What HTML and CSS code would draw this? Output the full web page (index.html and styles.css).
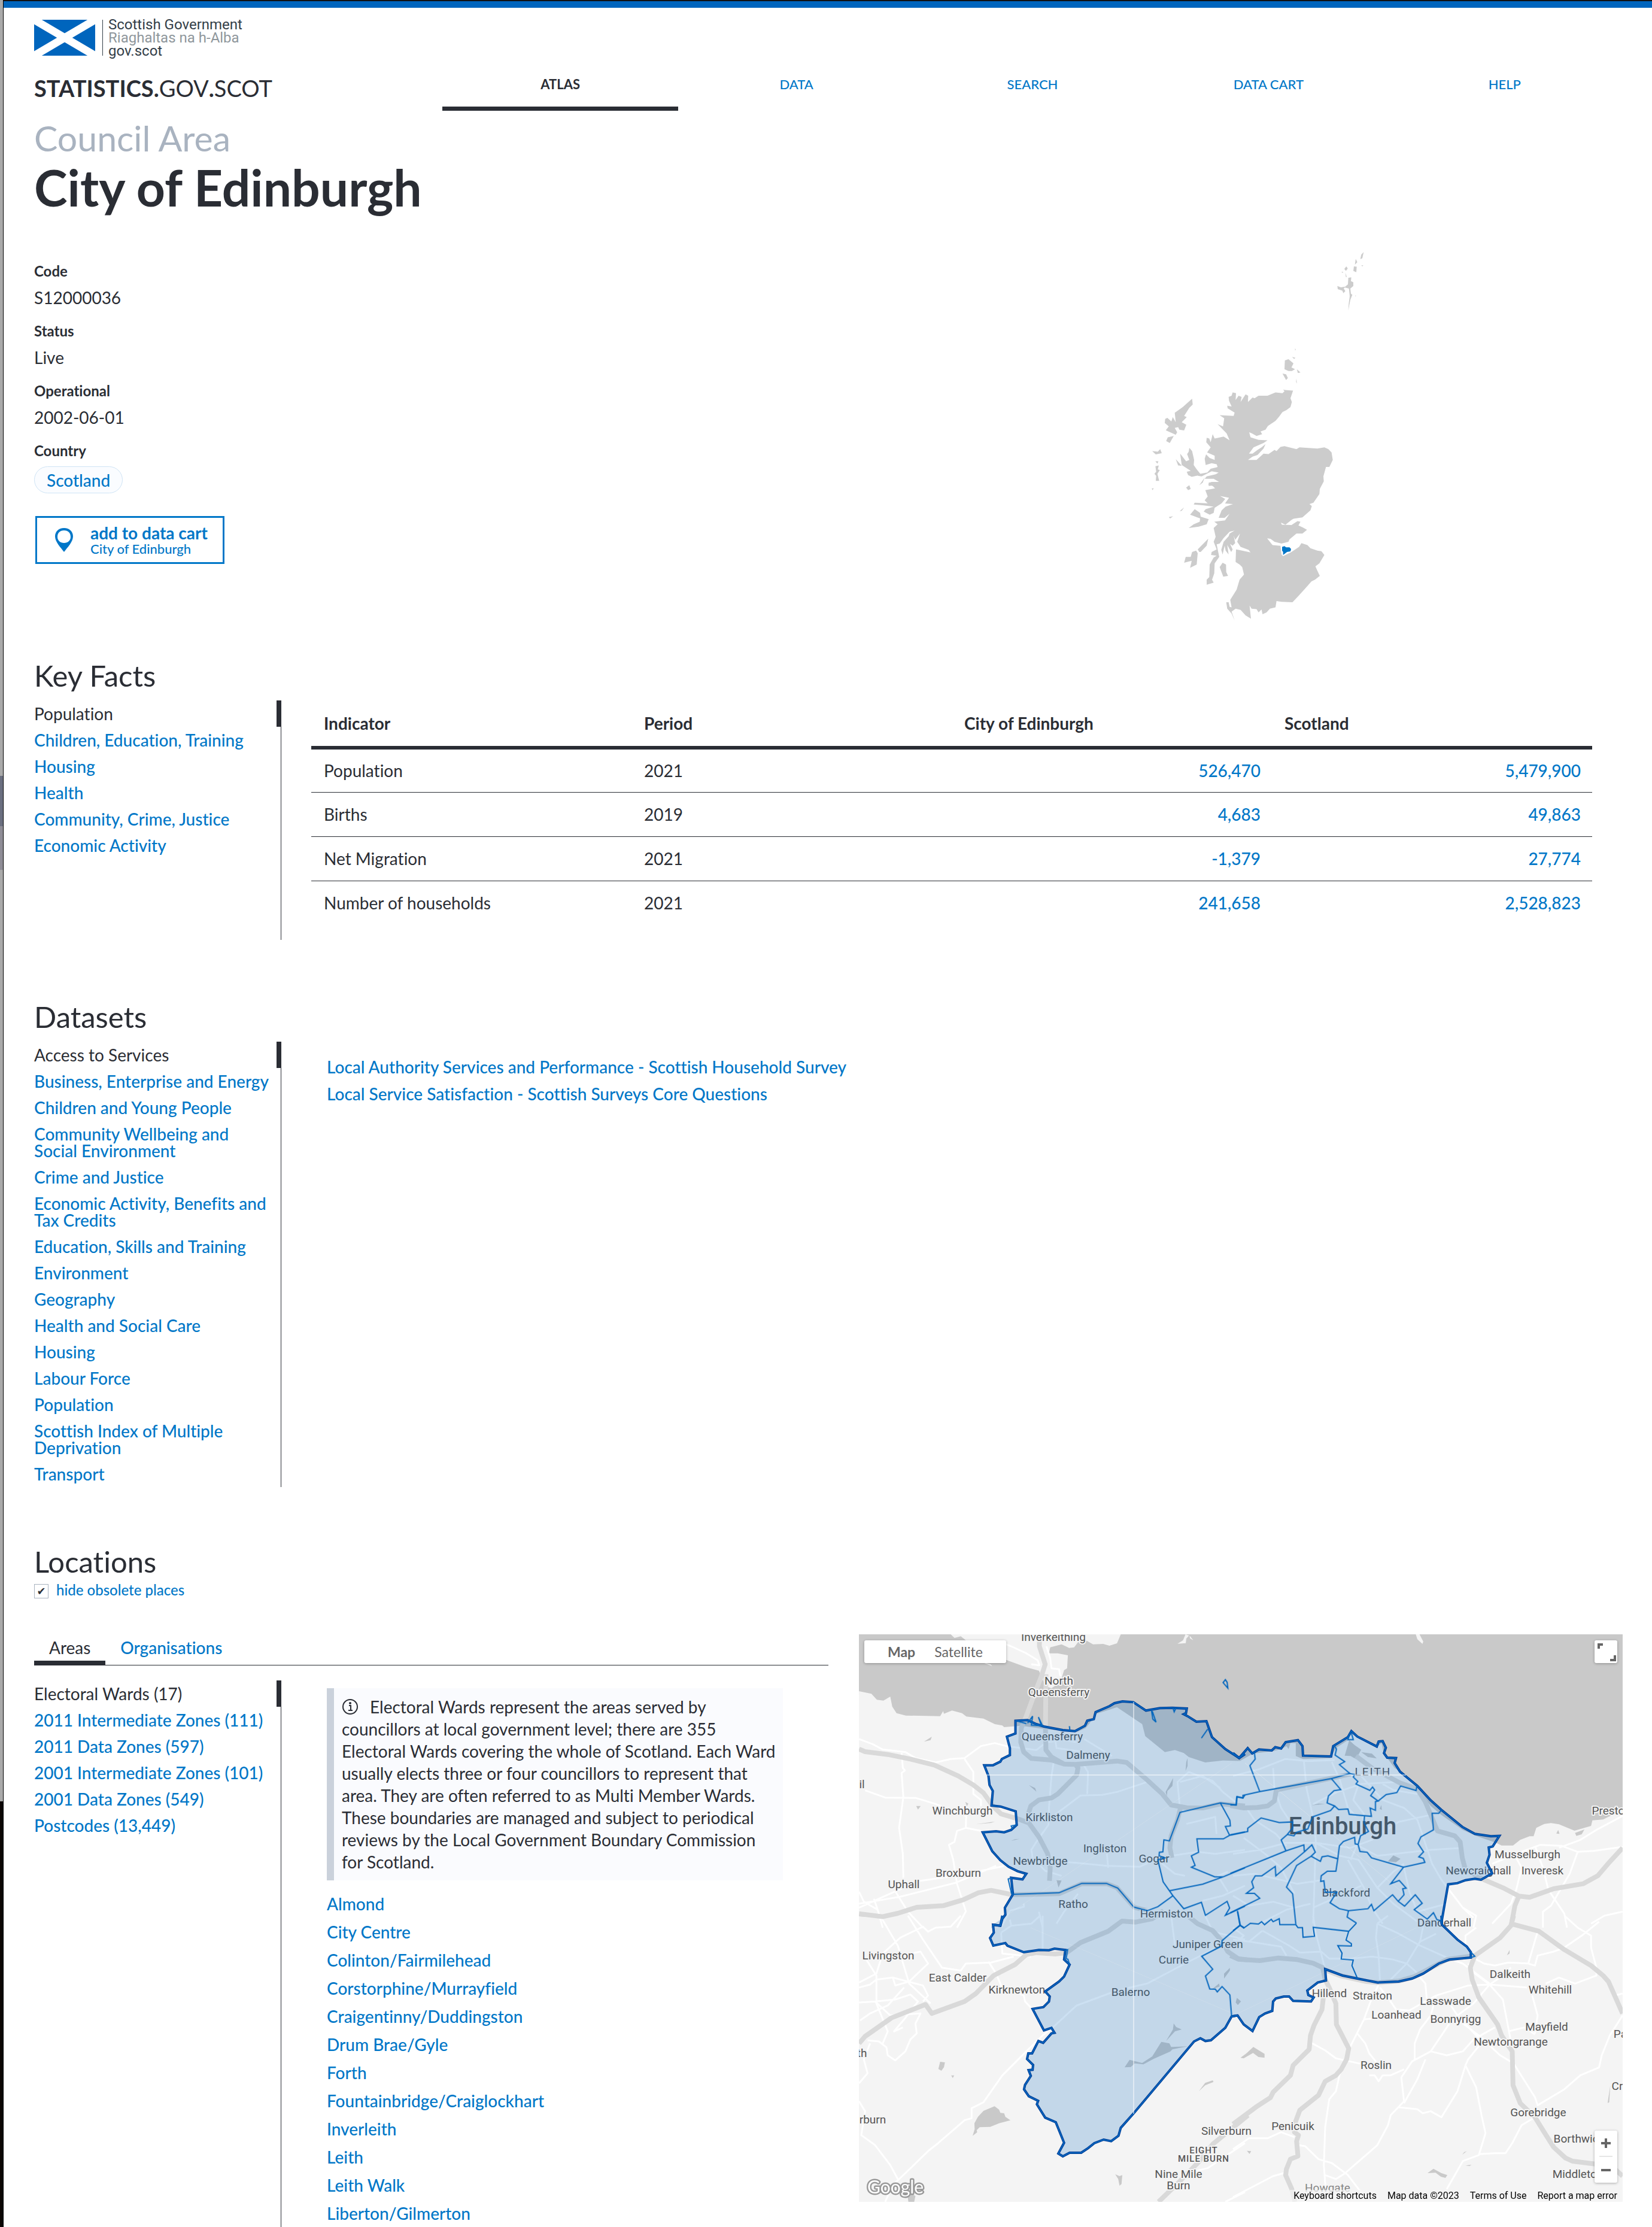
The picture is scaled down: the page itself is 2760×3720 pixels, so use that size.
FILE: index.html
```html
<!DOCTYPE html>
<html lang="en">
<head>
<meta charset="utf-8">
<title>City of Edinburgh - statistics.gov.scot</title>
<link rel="stylesheet" href="styles.css">
</head>
<body>
<div class="edge"></div>
<div class="page">
  <header class="site-header">
    <a class="logo" href="#">
      <svg class="flag" viewBox="0 0 102 60" aria-hidden="true"><rect width="102" height="60" fill="#0065bd"/><path d="M0 0 102 60M102 0 0 60" stroke="#fff" stroke-width="13"/></svg>
      <span class="logo-text"><span>Scottish Government</span><span class="gaelic">Riaghaltas na h-Alba</span><span>gov.scot</span></span>
    </a>
    <div class="header-row">
      <a class="brand" href="#"><b>STATISTICS.</b>GOV<b>.</b>SCOT</a>
      <nav class="main-nav">
        <a class="active" href="#">ATLAS</a>
        <a href="#">DATA</a>
        <a href="#">SEARCH</a>
        <a href="#">DATA CART</a>
        <a href="#">HELP</a>
      </nav>
    </div>
  </header>

  <main>
    <p class="kind">Council Area</p>
    <h1>City of Edinburgh</h1>

    <section class="summary">
      <div class="details">
        <dl>
          <div><dt>Code</dt><dd>S12000036</dd></div>
          <div><dt>Status</dt><dd>Live</dd></div>
          <div><dt>Operational</dt><dd>2002-06-01</dd></div>
          <div><dt>Country</dt><dd><a class="pill" href="#">Scotland</a></dd></div>
        </dl>
        <button class="cart-button" type="button">
          <svg class="pin" viewBox="0 0 30 40" aria-hidden="true"><path fill="#0077c8" fill-rule="evenodd" d="M15 0C6 0 0 6 0 14c0 9 9 18 15 26 6-8 15-17 15-26C30 6 24 0 15 0zm0 4c7 0 11 4 11 11 0 6-5 10-11 10S4 21 4 15C4 8 8 4 15 4z"/></svg>
          <span class="cart-text"><b>add to data cart</b><span>City of Edinburgh</span></span>
        </button>
      </div>
      <svg class="locator" viewBox="0 0 440 660" role="img" aria-label="Location within Scotland">
        <g transform="scale(.33333 .42092)">
          <g fill="#ccc">
            <path d="M838 600 825 630 832 645 825 665 805 677 785 685 768 703 750 720 712 740 700 755 675 762 683 773 655 780 632 770 618 765 625 785 665 795 710 797 690 808 640 825 617 850 635 850 660 835 680 825 700 812 690 830 660 855 635 862 612 875 655 875 690 850 715 852 745 835 755 840 775 823 795 820 855 832 870 825 960 830 995 825 1015 832 1031 845 1037 875 1020 903 1003 903 990 940 992 960 972 990 970 1010 940 1045 920 1050 932 1058 925 1075 885 1103 840 1108 830 1113 800 1132 777 1124 782 1132 830 1133 860 1118 875 1120 865 1135 885 1142 908 1152 885 1167 855 1167 820 1190 815 1200 780 1207 745 1200 725 1188 708 1186 735 1213 775 1216 780 1250 788 1257 830 1240 868 1220 880 1205 910 1213 925 1225 960 1235 980 1237 995 1252 970 1285 950 1297 960 1315 972 1335 948 1350 930 1357 905 1380 865 1415 835 1440 780 1438 755 1435 750 1460 722 1465 705 1480 685 1487 680 1468 665 1480 655 1467 630 1465 620 1453 627 1505 600 1492 575 1470 550 1465 530 1477 545 1512 530 1485 508 1465 503 1440 515 1440 520 1458 530 1460 523 1430 555 1390 570 1350 592 1330 583 1300 570 1290 550 1280 552 1230 565 1232 625 1242 615 1232 575 1220 558 1200 572 1167 548 1192 540 1175 548 1205 535 1215 522 1208 535 1230 528 1240 508 1212 515 1250 500 1235 495 1215 485 1250 478 1232 490 1200 515 1178 520 1167 545 1155 520 1160 490 1185 470 1207 455 1210 468 1260 445 1285 443 1325 432 1350 440 1362 405 1370 405 1350 418 1340 420 1290 440 1262 455 1255 427 1252 430 1240 455 1230 440 1200 450 1180 440 1145 460 1130 443 1120 497 1115 520 1088 495 1105 465 1105 480 1075 500 1060 537 1050 497 1048 517 1025 472 1018 498 1030 480 1047 445 1065 440 1085 420 1092 390 1080 400 1070 440 1060 385 1055 340 1052 345 1045 410 1047 395 1035 410 1020 398 995 447 988 435 978 412 972 430 962 467 962 440 950 395 950 405 940 450 932 465 925 430 920 380 940 360 938 372 930 408 925 425 910 460 903 455 892 430 888 400 895 395 870 402 853 420 867 445 875 445 858 407 845 425 825 403 805 405 787 418 790 425 805 435 773 445 790 490 782 520 797 505 770 460 733 487 742 493 710 470 697 540 700 545 687 510 670 508 660 530 663 517 640 515 625 530 620 535 607 552 610 550 637 565 620 580 625 575 645 600 615 613 620 612 645 635 627 645 630 665 620 710 620 750 607 785 610 795 602 790 597z"/>
            <path d="M332 632 335 655 318 668 292 700 305 705 280 725 303 735 292 758 268 755 262 745 245 748 257 765 250 775 200 757 215 742 195 728 197 712 208 708 228 722 235 705 250 725 245 688 285 665zM210 785 240 780 220 808 202 800zM132 840 160 842 172 832 180 848 150 853zM148 880 163 880 158 890zM148 900 165 897 160 912 170 915 158 930 167 958 150 958 152 938 143 930 152 922zM130 988 140 988 133 995z"/>
            <path d="M318 827 332 840 342 875 340 895 355 912 378 935 358 937 330 942 312 935 305 922 325 918 280 895 272 850 302 880 318 875 307 852 315 842zM250 872 280 898 262 897zM302 985 318 975 325 990 312 995zM395 945 385 965 368 975zM415 965 435 962 448 975 415 978zM270 1078 292 1063 280 1077zM215 1102 237 1098 222 1107zM345 1070 372 1085 375 1100 415 1110 405 1130 365 1140 315 1145 340 1130 370 1120 372 1107 322 1092zM413 1187 405 1215 375 1240 368 1240 360 1230zM352 1235 360 1245 355 1290 322 1303 330 1275 292 1283 300 1260 325 1260 332 1240zM485 1283 502 1290 503 1320 512 1335 488 1338 470 1300z"/>
            <path d="M797 480 815 475 840 492 830 508 848 515 832 522 815 522 795 515zM785 532 803 535 812 550 803 558zM833 466 850 470 843 474zM857 515 875 528 862 530zM848 432 852 438 848 440zM855 552 857 572 853 565zM790 595 795 597 792 600z"/>
            <path d="M1192 50 1185 75 1175 78 1180 60zM1152 77 1160 90 1148 100zM1143 107 1157 108 1155 130 1140 125zM1095 117 1105 107 1112 115 1103 125zM1080 128 1088 128 1088 133zM1100 132 1107 148 1103 150zM1115 152 1130 150 1128 165 1140 170 1140 185 1125 195 1128 215 1135 220 1125 240 1120 260 1115 282 1117 255 1122 225 1118 195 1095 190 1113 178zM1060 185 1078 190 1100 187 1092 195 1100 205 1090 213 1085 203 1062 197zM1180 103 1190 103 1185 107zM1150 222 1153 222 1152 228z"/>
          </g>
          <path fill="#0077c8" d="M783 1220 795 1217 803 1222 820 1222 828 1228 825 1238 808 1240 788 1252 788 1240 783 1235z"/>
        </g>
      </svg>
    </section>

    <section class="key-facts">
      <h2>Key Facts</h2>
      <div class="split">
        <ul class="side-nav">
          <li class="active">Population</li>
          <li><a href="#">Children, Education, Training</a></li>
          <li><a href="#">Housing</a></li>
          <li><a href="#">Health</a></li>
          <li><a href="#">Community, Crime, Justice</a></li>
          <li><a href="#">Economic Activity</a></li>
        </ul>
        <div class="table-wrap">
          <table>
            <thead><tr><th>Indicator</th><th>Period</th><th>City of Edinburgh</th><th>Scotland</th></tr></thead>
            <tbody>
              <tr><td>Population</td><td>2021</td><td class="num"><a href="#">526,470</a></td><td class="num"><a href="#">5,479,900</a></td></tr>
              <tr><td>Births</td><td>2019</td><td class="num"><a href="#">4,683</a></td><td class="num"><a href="#">49,863</a></td></tr>
              <tr><td>Net Migration</td><td>2021</td><td class="num"><a href="#">-1,379</a></td><td class="num"><a href="#">27,774</a></td></tr>
              <tr><td>Number of households</td><td>2021</td><td class="num"><a href="#">241,658</a></td><td class="num"><a href="#">2,528,823</a></td></tr>
            </tbody>
          </table>
        </div>
      </div>
    </section>

    <section class="datasets">
      <h2>Datasets</h2>
      <div class="split">
        <ul class="side-nav">
          <li class="active">Access to Services</li>
          <li><a href="#">Business, Enterprise and Energy</a></li>
          <li><a href="#">Children and Young People</a></li>
          <li><a href="#">Community Wellbeing and Social Environment</a></li>
          <li><a href="#">Crime and Justice</a></li>
          <li><a href="#">Economic Activity, Benefits and Tax Credits</a></li>
          <li><a href="#">Education, Skills and Training</a></li>
          <li><a href="#">Environment</a></li>
          <li><a href="#">Geography</a></li>
          <li><a href="#">Health and Social Care</a></li>
          <li><a href="#">Housing</a></li>
          <li><a href="#">Labour Force</a></li>
          <li><a href="#">Population</a></li>
          <li><a href="#">Scottish Index of Multiple Deprivation</a></li>
          <li><a href="#">Transport</a></li>
        </ul>
        <ul class="dataset-links">
          <li><a href="#">Local Authority Services and Performance - Scottish Household Survey</a></li>
          <li><a href="#">Local Service Satisfaction - Scottish Surveys Core Questions</a></li>
        </ul>
      </div>
    </section>

    <section class="locations">
      <h2>Locations</h2>
      <div class="toggle"><input type="checkbox" id="hide-obsolete" checked><label for="hide-obsolete">hide obsolete places</label></div>
      <div class="places">
        <div class="areas">
          <nav class="tabs"><a class="active" href="#">Areas</a><a href="#">Organisations</a></nav>
          <div class="areas-body">
            <ul class="side-nav">
              <li class="active">Electoral Wards (17)</li>
              <li><a href="#">2011 Intermediate Zones (111)</a></li>
              <li><a href="#">2011 Data Zones (597)</a></li>
              <li><a href="#">2001 Intermediate Zones (101)</a></li>
              <li><a href="#">2001 Data Zones (549)</a></li>
              <li><a href="#">Postcodes (13,449)</a></li>
            </ul>
            <div class="area-list">
              <p class="info"><svg viewBox="0 0 28 28" aria-hidden="true"><circle cx="14" cy="14" r="12" fill="none" stroke="#2a2d34" stroke-width="2"/><path d="M12 12h3v7m-4 1h7" fill="none" stroke="#2a2d34" stroke-width="2"/><circle cx="14" cy="8" r="2" fill="#2a2d34"/></svg>Electoral Wards represent the areas served by councillors at local government level; there are 355 Electoral Wards covering the whole of Scotland. Each Ward usually elects three or four councillors to represent that area. They are often referred to as Multi Member Wards. These boundaries are managed and subject to periodical reviews by the Local Government Boundary Commission for Scotland.</p>
              <ul class="wards">
                <li><a href="#">Almond</a></li>
                <li><a href="#">City Centre</a></li>
                <li><a href="#">Colinton/Fairmilehead</a></li>
                <li><a href="#">Corstorphine/Murrayfield</a></li>
                <li><a href="#">Craigentinny/Duddingston</a></li>
                <li><a href="#">Drum Brae/Gyle</a></li>
                <li><a href="#">Forth</a></li>
                <li><a href="#">Fountainbridge/Craiglockhart</a></li>
                <li><a href="#">Inverleith</a></li>
                <li><a href="#">Leith</a></li>
                <li><a href="#">Leith Walk</a></li>
                <li><a href="#">Liberton/Gilmerton</a></li>
              </ul>
            </div>
          </div>
        </div>

        <div class="map">
          <svg class="map-art" viewBox="0 0 1276 948" role="img" aria-label="Map of City of Edinburgh wards">
            <defs>
              <path id="edge-nw" d="M1568 630 1545 650 1490 605 1437 545 1415 465 1375 468 1340 440 1325 430 1334 425 1337 402 1280 398 1230 400 1175 412 1125 370 1082 366 1050 375 1030 390 975 420 968 455 942 463 933 488 893 515 845 510 770 492 740 480 705 460 657 463 657 527 623 543 635 600 635 635 603 655 597 668 568 686 533 686 550 740 554 785 567 815 562 888 598 893 658 917 662 985 640 1010 612 1022 580 1017 527 1022 565 1117 597 1162 630 1195 665 1217 700 1230 685 1258 640 1250 647 1333 615 1400 617 1435 605 1455 597 1490 568 1485"/>
              <path id="edge-sw" d="M605 0 597 50 568 45 571 85 556 112 569 150 617 137 625 150 690 183 750 172 790 173 812 165 855 172 850 220 872 245 850 305 830 330 775 380 793 405 790 430 768 458 725 467 770 575 800 562 812 587 800 590 767 637 748 628 723 690 708 690 703 718 727 748 725 772 709 774 718 803 695 848 691 870 710 905 747 928 742 945 775 1012 817 1035 850 1138 827 1192 845 1206 872 1188 918 1188 945 1165 970 1140 1007 1122 1037 1130 1066 1103 1075 1063 1130 985 1366 630 1391 614 1411 628 1433 624 1490 562 1515 505 1538 500"/>
              <path id="edge-se" d="M-5 505 17 500 40 545 73 578 98 508 120 490 147 477 150 430 160 415 190 405 210 405 225 427 292 430 302 410 282 398 278 375 317 335 348 325 345 268 410 300 465 315 542 335 620 330 670 315 712 290 770 240 810 220 890 210 890 183 875 155 840 120 782 45 780 0"/>
              <path id="edge-ne" d="M782 1485 780 1475 805 1283 840 1277 870 1262 905 1255 928 1260 970 1228 950 1175 960 1135 957 1098 972 1093 997 1040 965 1042 905 1030 858 995 780 910 740 862 690 790 625 718 605 675 610 650 577 648 565 625 572 598 560 565 545 567 538 592 465 542 443 515 430 545 375 590 367 642 262 638 260 590 243 560 197 570 180 602 158 595 145 612 97 607 72 627 55 600 23 650 0 625"/>
            </defs>
            <rect width="1276" height="948" fill="#c9c9c9"/>
            <g fill="#f4f4f4">
              <path transform="translate(-15 -10) scale(.42092 .33333)" d="M400 30 415 48 440 40 475 75 520 85 600 115 620 158 700 195 750 212 760 240 775 290 800 300 835 270 850 210 862 200 865 135 825 125 790 125 795 95 840 80 870 98 890 95 905 70 940 62 965 80 1005 78 1030 87 1060 75 1075 30zM1332 30 1346 36 1335 52 1333 74 1300 77 1322 60zM1348 36 1363 60 1350 50zM565 190 515 165 558 180zM36 315 85 328 107 358 133 362 160 342 168 392 185 425 222 437 358 440 370 415 373 428 405 412 445 425 462 442 530 452 575 480 605 487 612 495 680 488 750 500 850 515 900 520 935 500 950 478 975 430 1060 395 1160 480 1172 540 1250 620 1290 610 1325 625 1345 645 1410 672 1480 662 1568 665 1568 3000 0 3000z"/>
              <path transform="translate(625 -10) scale(.44643 .33333)" d="M684 30 698 30 712 66 709 78 690 55zM-20 670 25 665 75 628 150 615 180 605 200 590 208 605 215 575 235 575 235 640 262 655 365 650 385 600 430 560 443 520 540 592 556 575 565 635 580 655 605 700 655 745 690 800 740 890 780 935 860 1010 910 1040 985 1075 1005 1088 1048 1088 1075 1060 1110 1042 1125 1042 1135 1000 1165 980 1190 976 1220 982 1278 1014 1340 990 1345 962 1385 958 1458 910 1480 900 1480 3000 -20 3000z"/>
            </g>
            <!-- lochs, reservoirs and docks -->
            <g fill="#c9c9c9">
              <path transform="translate(-15 -10) scale(.42092 .33333)" d="M325 543 294 568 320 560zM710 785 735 800 740 818zM263 890 281 890 270 908zM458 870 470 878 464 892zM820 1262 840 1264 828 1298zM1283 750 1280 790 1260 815 1258 840 1253 820zM1340 650 1340 690 1332 715 1335 670zM672 1055 640 1065 655 1057zM575 968 500 982 560 975zM1392 480 1412 490 1400 525z"/>
              <path transform="translate(-15 470) scale(.42092 .33333)" d="M358 732 377 735 373 760 363 777 351 768zM402 800 414 800 408 814zM574 955 592 972 597 988 612 990 617 1008 637 1025 592 1040 557 1058 515 1060 503 1075 505 1085 487 1103 495 1070 494 1040 508 1008 530 978zM1236 632 1268 640 1275 658 1340 655 1280 670 1272 680 1205 718 1165 745 1130 740 1115 758 1090 760 1110 722 1160 738 1200 705zM1285 540 1295 558 1317 570 1290 580 1255 628 1282 570zM1465 340 1468 355 1437 368zM1535 415 1550 430 1540 447 1533 435zM1508 262 1508 275 1485 315 1485 290zM1053 1296 1070 1305 1081 1300 1078 1345 1070 1353 1065 1320zM1440 825 1443 833 1410 850 1385 880 1410 838zM225 1375 260 1405 255 1434 232 1434zM0 0 180 0 130 12z"/>
              <path transform="translate(625 -10) scale(.44643 .33333)" d="M435 560 455 585 480 608 460 655 440 640 418 638zM480 620 520 628 538 652 505 645zM600 1138 627 1155 610 1172 580 1168zM555 885 557 910 549 905zM1217 1010 1222 1030 1210 1028zM1280 1025 1315 1008 1305 1032 1285 1040zM295 887 345 880 320 878z"/>
              <path transform="translate(625 470) scale(.44643 .33333)" d="M76 658 118 692 118 712 95 708 75 688 40 715 28 712 50 690zM15 412 30 430 18 447 10 435zM750 1268 780 1290 802 1300 795 1314 778 1308 758 1288 728 1290zM52 1178 68 1180 62 1194zM1035 172 1035 190 1025 198zM875 1180 858 1198 865 1185zM893 1248 870 1252 885 1255zM1412 850 1408 935 1402 938z"/>
            </g>
            <g class="minor">
              <g transform="translate(-15 -10) scale(.42092 .33333)">
                <path d="M590 65 640 90 700 125 745 160 752 185 720 180M780 90 795 150 800 200 830 205 835 240M36 555 90 580 130 607 220 620 260 650 340 672 400 655 455 650 520 590 575 575 620 590 740 610 780 570 850 560 900 570M205 625 210 700 218 712 205 725 212 845 195 1000 210 1130 212 1250M60 812 140 848 262 850 340 880 400 910 460 940M455 655 490 720 490 830 520 860 520 890M462 920 460 1000 425 1015 415 1070 393 1085 410 1160 425 1280 460 1418 425 1500M460 1000 520 1015M36 1400 180 1318 280 1265 420 1240 520 1215 610 1192M36 1380 200 1345 420 1275 580 1190M36 1320 55 1370 110 1410 130 1500M95 1355 110 1410M180 1318 230 1420 290 1500"/>
                <path d="M815 560 820 600 930 620M930 555 1040 640M925 680 945 720 942 830M810 660 800 740 790 900 788 985 740 1070 720 1110 725 1150 775 1215 840 1240M1180 770 1060 820 1000 835 915 838 850 900 780 965M790 1165 900 1175 1020 1190 1150 1195 1225 1150 1380 1120 1450 1130 1568 1110M1310 900 1300 770 1345 720 1440 765 1480 820 1530 870M1310 770 1400 740 1470 800M1335 980 1450 945 1455 1030M1230 1170 1290 1230 1330 1240M1500 1220 1460 1240 1500 1320M1568 1290 1480 1340 1400 1365M690 1380 690 1395 635 1415 600 1500M750 1420 765 1500M905 1330 850 1420 820 1480M1020 1130 1025 1200"/>
              </g>
              <g transform="translate(-15 470) scale(.42092 .33333)">
                <path d="M120 0 190 150 235 340 320 440M230 0 290 120 365 260 440 275 460 240 560 235 650 205M36 335 105 290 130 190 200 110 290 55 310 80 340 60 400 55 440 0M60 210 105 300 105 440 150 580 130 640M36 360 80 345 105 320 170 310 290 350 310 400 290 430M170 310 180 350 235 330 310 240 280 180 200 200 130 190M36 435 100 430 180 420 240 395 270 430 215 520 175 580 210 560M100 430 160 500 280 490 260 540 265 590 240 620 220 680 180 725 150 700 145 660 115 630 70 625M40 525 80 490 150 450 215 360M550 230 580 290 600 350 690 400 695 430 725 470M36 840 70 790 55 720 80 640M36 930 60 980 45 1100 100 1150 160 1250 190 1320M140 1434 170 1350 245 1260 310 1180 350 1140 455 1025 483 1015 483 965 530 935 605 800 700 680 765 600 805 560 900 450 1060 375 1180 340 1330 240 1470 150"/>
                <path d="M600 85 605 190 720 205M635 20 640 50 720 40 755 0M765 0 765 175M1275 0 1285 100 1290 150M1410 0 1440 80 1568 120M1490 1434 1568 1385M1340 1290 1420 1265 1568 1140M600 85 640 50"/>
              </g>
              <g transform="translate(625 -10) scale(.44643 .33333)">
                <path d="M0 740 100 705 195 655 280 665 380 660M150 700 155 800 180 900 210 960M265 660 275 800 300 950 310 1060 300 1480M370 670 400 760 430 900 460 940M300 880 390 820 480 780 610 770M440 720 470 780 450 860 490 930 460 1100 440 1160M480 740 560 860 640 900 690 960 745 1180 780 1260 860 1400 900 1450M560 780 600 810 690 830M50 900 80 960 160 1030 200 1090M0 1130 100 1110 200 1075 310 1075 440 1100 520 1060 620 970 740 935M40 1050 120 1130 180 1200 230 1330M310 1075 400 1140 470 1160 540 1300 600 1380 700 1480M430 1160 490 1300 520 1400 560 1480M470 1090 540 1140 740 1110 860 1100M0 1240 80 1230 240 1280 340 1260M0 1340 60 1390 150 1370 230 1400M640 1200 660 1320 690 1420M540 1300 600 1220 640 1180M300 1400 400 1340 480 1290M100 1480 200 1410 290 1380M690 1420 800 1380"/>
                <path d="M970 1180 1060 1130 1150 1085 1230 1090 1290 1120 1350 1115 1458 1095M1220 1100 1300 1060 1360 1010 1458 940M1060 1150 1080 1200 1060 1310 1040 1380 970 1480M1130 1090 1160 1200 1180 1310 1240 1430 1250 1500M1290 1120 1260 1230 1190 1390 1160 1420 1160 1500M1340 1480 1390 1440 1458 1420M900 1500 910 1440 860 1400"/>
              </g>
              <g transform="translate(625 470) scale(.44643 .33333)">
                <path d="M0 120 60 130 110 75M60 130 180 155 200 200M110 75 210 150 250 185 330 180 360 215 440 215 520 205 600 220 650 240 700 300M300 0 310 90 330 190 345 270M540 40 535 110 545 200 550 330M540 40 620 90 700 150 800 210 860 240 960 340M720 0 700 130 650 240 590 320M540 40 580 0M700 130 760 90M910 60 870 100 870 150M0 60 40 100 0 150"/>
                <path d="M545 345 515 430 490 520 460 600 430 680M550 360 590 430 610 470 660 475 760 400 880 350 960 345 1100 360M490 520 560 510M290 635 345 675 385 715 470 740 540 745M465 590 495 640 510 690 540 740M640 770 590 800 560 800 545 830 530 800 510 800M960 345 1010 420 1020 490 1030 560 1050 700M960 345 900 440 820 520 740 680 670 730 630 810 640 930 590 1000 580 1050 540 1150 420 1290 385 1320 345 1300M760 400 740 500 700 570 680 640 680 720M800 420 840 500 910 600 960 650 1000 700 1050 740 1130 910 1140 950 1240 870 1300 800 1370 760 1380 700 1410 600 1458 500M740 680 800 700 860 680 900 620 980 560M860 540 940 620 880 720 870 750 910 860 930 1000 945 1090 920 1200 860 1230 800 1370M870 750 840 880 780 1010 740 980 710 990 690 970 620 960M920 1195 980 1190 1020 1190 1045 1140 1080 1050 1130 1010M720 720 690 820 640 940"/>
                <path d="M1240 0 1290 60 1340 100 1340 160 1360 260 1360 300 1280 340 1220 310 1170 340M1140 80 1105 240 1130 250 1140 200 1200 180 1240 160 1310 95 1370 30M905 215 940 240 980 250 1030 235 1110 240M960 345 1000 310 1040 260M880 240 905 290 960 345M700 310 720 340 725 420M1120 400 1140 500 1130 590M1030 580 1090 560 1130 595M1458 390 1430 400M350 1434 340 1250 345 1060 360 920 385 880 400 790M0 1170 60 1115 130 1115 180 1085 230 1110M245 1150 270 1155 320 1220 370 1240 430 1300 470 1370 490 1400M0 1410 150 1305 190 1290"/>
              </g>
            </g>
            <g class="major">
              <path transform="translate(-15 -10) scale(.42092 .33333)" d="M36 605 60 618 150 632 240 655 335 685 430 740 490 785 530 825 570 895 600 930 660 952 710 975 750 1045 785 1130 795 1200 792 1265M752 30 752 90 775 180 760 240 735 320 700 440 680 500 678 570 690 620 720 652 800 660 850 680 895 682 1060 665 1098 672 1180 760 1240 830 1275 885 1340 900 1400 900 1470 880 1568 890M778 230 776 500 778 610 800 645 850 680M895 682 905 700 900 735 825 830 800 850 750 860 718 890 708 930 712 975M1312 900 1300 960 1275 1040 1270 1100 1278 1150M36 1430 130 1445 190 1428 265 1398 370 1390 450 1360 510 1325 560 1313 645 1335 830 1330 920 1280 1020 1280 1060 1300 1128 1398 1180 1415"/>
              <path transform="translate(-15 470) scale(.42092 .33333)" d="M36 640 60 605 165 512 300 445 325 490 455 430 500 390 570 300 655 245 700 195 740 185 815 192 860 185 915 135 1025 78 1080 27 1135 32 1200 15 1245 -25M1345 5 1380 40 1440 75 1475 125 1500 180 1540 215 1580 222M1580 1000 1440 1145 1380 1240 1310 1330 1225 1434"/>
              <path transform="translate(625 -10) scale(.44643 .33333)" d="M-10 888 40 900 90 898 130 890 155 865 162 810 440 730M460 640 520 700 625 775 690 805 720 870 745 950 765 1015 830 1040 850 1070 858 1150 870 1210 940 1260 1010 1300 1070 1342 1110 1348 1200 1305 1310 1280 1365 1240 1410 1170 1458 1100M1070 1342 1055 1390 1043 1475"/>
              <path transform="translate(625 470) scale(.44643 .33333)" d="M-10 200 20 218 100 225 170 212 240 220 300 238 335 260 345 320 360 360 385 440 387 545 433 665 425 720 405 770 385 800 345 830 320 900 250 975 232 1040 230 1085 245 1100 238 1130 243 1205 215 1220 200 1270 197 1300 220 1370 232 1434M338 410 333 470 303 550 290 600 285 670 225 750 215 800 150 885 140 912 85 960 0 1045M342 270 400 300 500 330 545 335 620 328 680 305 800 220 840 212 905 200 1000 110 1040 50 1050 0M1040 40 1145 78 1240 170 1340 250 1385 300 1405 330 1458 490M905 200 888 260 895 320 920 410 990 545 1005 600 1045 680 1048 850 1075 940 1130 1010 1160 1075 1200 1160 1245 1215 1270 1230 1360 1245 1430 1270 1458 1305"/>
            </g>
            <g class="labels">
              <text x="325" y="11">Inverkeithing</text><text x="334" y="84">North</text><text x="334" y="103">Queensferry</text>
              <text x="323" y="177">Queensferry</text><text x="383" y="208">Dalmeny</text><text x="5" y="257">il</text>
              <text x="173" y="301">Winchburgh</text><text x="318" y="312">Kirkliston</text><text x="411" y="364">Ingliston</text>
              <text x="493" y="381">Gogar</text><text x="303" y="385">Newbridge</text><text x="166" y="405">Broxburn</text>
              <text x="75" y="424">Uphall</text><text x="358" y="457">Ratho</text><text x="514" y="473">Hermiston</text>
              <text x="49" y="543">Livingston</text><text x="165" y="580">East Calder</text><text x="264" y="600">Kirknewton</text>
              <text x="454" y="604">Balerno</text><text x="526" y="550">Currie</text><text x="583" y="524">Juniper Green</text>
              <text x="5" y="706">th</text><text x="23" y="817">rburn</text><text x="614" y="836">Silverburn</text>
              <text x="534" y="908">Nine Mile</text><text x="534" y="927">Burn</text>
              <text x="786" y="606">Hillend</text><text x="858" y="610">Straiton</text><text x="980" y="619">Lasswade</text>
              <text x="898" y="642">Loanhead</text><text x="997" y="649">Bonnyrigg</text><text x="1149" y="662">Mayfield</text>
              <text x="1089" y="687">Newtongrange</text><text x="1088" y="574">Dalkeith</text><text x="1155" y="600">Whitehill</text>
              <text x="1272" y="674">Pa</text><text x="864" y="726">Roslin</text><text x="1267" y="761">Cr</text>
              <text x="1135" y="805">Gorebridge</text><text x="725" y="828">Penicuik</text><text x="1203" y="849">Borthwick</text>
              <text x="1201" y="908">Middleton</text><text x="783" y="931" opacity=".7">Howgate</text>
              <text x="1117" y="374">Musselburgh</text><text x="1035" y="401">Newcraighall</text><text x="1142" y="401">Inveresk</text>
              <text x="814" y="438">Blackford</text><text x="978" y="488">Danderhall</text><text x="1252" y="301">Presto</text>
              <text class="district" x="859" y="236">LEITH</text>
              <text class="hamlet" x="576" y="867">EIGHT</text><text class="hamlet" x="576" y="881">MILE BURN</text>
              <text class="city" x="808" y="334">Edinburgh</text>
            </g>
            <g fill="#0065bd" opacity=".2">
              <g transform="translate(-15 -10) scale(.42092 .33333)"><use href="#edge-nw"/><path d="M568 1485 560 1500 1568 1500 1568 630z"/></g>
              <g transform="translate(-15 470) scale(.42092 .33333)"><use href="#edge-sw"/><path d="M605 0 1538 0 1538 500z"/></g>
              <g transform="translate(625 470) scale(.44643 .33333)"><use href="#edge-se"/><path d="M780 0-5 0-5 505z"/></g>
              <g transform="translate(625 -10) scale(.44643 .33333)"><use href="#edge-ne"/><path d="M782 1485 780 1500-5 1500-5 620z"/></g>
            </g>
            <g class="outline">
              <g transform="translate(-15 -10) scale(.42092 .33333)"><use href="#edge-nw"/></g>
              <g transform="translate(-15 470) scale(.42092 .33333)"><use href="#edge-sw"/></g>
              <g transform="translate(625 470) scale(.44643 .33333)"><use href="#edge-se"/></g>
              <g transform="translate(625 -10) scale(.44643 .33333)"><use href="#edge-ne"/></g>
            </g>
            <g class="ward-lines">
              <g transform="translate(-15 -10) scale(.42092 .33333)"><use href="#edge-nw"/></g>
              <g transform="translate(-15 470) scale(.42092 .33333)"><use href="#edge-sw"/></g>
              <g transform="translate(625 470) scale(.44643 .33333)"><use href="#edge-se"/></g>
              <g transform="translate(625 -10) scale(.44643 .33333)"><use href="#edge-ne"/></g>
              <path transform="translate(-15 -10) scale(.42092 .33333)" d="M645 1333 830 1325 920 1278 1018 1278 1063 1302 1127 1397 1180 1415 1222 1395 1282 1340 1243 1270 1222 1160 1250 1150 1227 1140 1228 1122 1242 1120 1246 1060 1268 1065 1310 922 1470 875 1533 885 1535 845 1560 850 1568 835M1470 875 1508 962 1510 990 1490 993 1507 1037 1568 1020M1507 1037 1482 1055 1377 1055 1384 1122 1355 1140 1370 1188 1355 1197 1448 1245 1482 1245 1400 1282 1268 1315M1482 1245 1568 1200M1282 1340 1325 1405 1395 1373 1411 1438 1497 1368 1507 1402 1490 1438 1568 1392M1538 1415 1548 1488M1490 257 1481 272 1500 300 1497 270zM1197 412 1202 455 1215 470 1200 415M705 475 725 440 720 485 760 488 748 445 765 490M1420 505 1395 550M871 490 873 512M1282 400 1287 418 1293 402M660 463 700 477M640 1250 628 1256 642 1333M662 985 640 990 645 1005"/>
              <path transform="translate(-15 470) scale(.42092 .33333)" d="M1565 60 1548 48 1477 125 1475 152 1396 203 1440 268 1411 302 1428 367 1450 368 1458 382 1477 355 1508 397 1515 505M855 172 864 170 858 215 865 218 872 245"/>
              <path transform="translate(625 -10) scale(.44643 .33333)" d="M-10 1035 55 1018 55 1002 105 950 173 973 223 970 223 1000 203 1033 228 1040 237 1022 280 1005 297 945 365 913 380 890 352 875 357 840 378 813 403 808 368 753 437 727M-10 885 12 885 15 843 37 850 37 837 100 818 368 753M100 818 63 688 83 655 80 625M380 590 387 605 382 635 418 668 398 683 437 727 455 733 450 745 467 767 460 780 512 812 522 795 530 810 515 838 543 865 533 868 533 912 513 900 518 942 435 932 430 905 395 908 380 890M543 865 573 833 613 823 627 790 685 813 688 790M203 1033 180 1060 198 1115 265 1085 267 1120 160 1240 158 1193 108 1240 83 1240 70 1270 77 1300 50 1328 80 1328 100 1353-10 1425M198 1115-10 1228M267 1120 295 1085 308 1122 292 1142 238 1188 200 1297 223 1330 235 1483M292 1142 327 1168 333 1145 355 1140 392 1155 398 1090 413 1068 455 1047 457 1080 468 1083 477 1040 507 1018 490 975 492 938M468 1083 475 1118 502 1122 518 1150 638 1197 718 1173 712 1153 695 1145 713 1120 692 1078 703 1045 750 1010 745 927 770 927 780 910M638 1197 590 1280 622 1263 648 1302 635 1305 640 1335 618 1368 597 1335 527 1415 518 1383 505 1405 432 1415 398 1405 363 1375 388 1322 345 1322 340 1265 328 1268 330 1240 353 1217 385 1217 392 1155M618 1368 642 1392 682 1335 708 1378 678 1410 727 1457 750 1425 763 1460 780 1465M432 1415 427 1447 462 1477M17 1420 27 1487M437 525 430 558 450 558 443 525"/>
              <path transform="translate(625 470) scale(.44643 .33333)" d="M0 75 27 48 40 62 65 38 95 42 107 30 118 45 143 18 150 30 173 15 175 45 235 45 243 60 260 60 262 108 305 103 300 58 433 78 462 37M433 78 423 122 443 140 443 152 392 150 408 187 405 217 450 222 445 250 465 312M890 183 905 203 890 210"/>
            </g>
            <path d="M459 113V801M213 235H914" stroke="#fff" stroke-width="1" fill="none"/>
            <text class="google" x="14" y="934">Google</text>
          </svg>
          <div class="map-type"><button type="button" class="on">Map</button><button type="button">Satellite</button></div>
          <button type="button" class="map-full" aria-label="Full screen"><svg viewBox="0 0 38 38"><path d="M7 14V7h7M34 25v8h-8" fill="none" stroke="#666" stroke-width="4"/></svg></button>
          <div class="map-zoom">
            <button type="button" aria-label="Zoom in"><svg viewBox="0 0 16 16"><path d="M8 0v16M0 8h16" stroke="#666" stroke-width="4"/></svg></button>
            <button type="button" aria-label="Zoom out"><svg viewBox="0 0 16 16"><path d="M0 8h16" stroke="#666" stroke-width="4"/></svg></button>
          </div>
          <div class="map-credits"><button type="button">Keyboard shortcuts</button><span>Map data ©2023</span><a href="#">Terms of Use</a><a href="#">Report a map error</a></div>
        </div>
      </div>
    </section>
  </main>
</div>
</body>
</html>
```
FILE: styles.css
```css
* { box-sizing: border-box; }

body {
  margin: 0;
  min-height: 100vh;
  display: grid;
  grid-template-columns: 6px minmax(0, 1fr);
  font-family: Lato, "Noto Sans", sans-serif;
  font-size: 28px;
  line-height: 36px;
  font-variant-ligatures: none;
  color: #2a2d34;
  background: #fff;
}

h1, h2, p, ul, dl, dd { margin: 0; padding: 0; }
ul { list-style: none; }
a { color: #0077c8; font-weight: 500; text-decoration: none; }
button { font: inherit; color: inherit; background: none; border: 0; padding: 0; cursor: pointer; }
svg { display: block; }

.edge {
  border-right: 1px solid #000;
  background: linear-gradient(#aaa 0 1296px, #6b6f80 1296px 1380px, #8f8d96 1380px 1453px, #aaa 1453px 3009px, #0c0604 3009px);
}

.page {
  display: flex;
  flex-direction: column;
  padding: 0 49px 0 51px;
  background: linear-gradient(#111 0 2px, #0065bd 2px 13px, #fff 13px);
}

/* Header */
.logo { display: flex; align-items: center; width: fit-content; margin-top: 30px; }
.flag { width: 102px; height: 60px; }
.logo-text {
  display: flex;
  flex-direction: column;
  margin-left: 12px;
  padding-left: 10px;
  font: 24px/22px Roboto, sans-serif;
  color: #333e48;
  background: linear-gradient(#333e48, #333e48) 0 3px / 1px 60px no-repeat;
}
.gaelic { color: #8f979c; }
.header-row { display: grid; grid-template-columns: 682px 1fr; margin-top: 31px; }
.brand { font-size: 38px; line-height: 40px; font-weight: 400; color: #2a2d34; }
.main-nav { display: grid; grid-template-columns: repeat(5, 1fr); }
.main-nav a {
  font-size: 22px;
  line-height: 28px;
  text-align: center;
  padding-bottom: 23px;
  border-bottom: 7px solid transparent;
}
.main-nav .active { color: #2a2d34; font-weight: 700; border-color: #2a2d34; }

/* Title */
main { flex: 1; display: flex; flex-direction: column; }
.kind { margin-top: 14px; font-size: 59px; line-height: 64px; color: #a9b3c0; }
h1 { margin-top: 5px; font-size: 84px; line-height: 90px; }
h2 { margin-bottom: 14px; font-size: 49px; line-height: 56px; font-weight: 400; }

/* Summary */
.summary { display: grid; grid-template-columns: 54fr 46fr; }
.details { padding-top: 80px; }
dl { display: flex; flex-direction: column; gap: 23px; }
dt { margin-bottom: 11px; font-size: 24px; line-height: 30px; font-weight: 700; }
.pill {
  display: inline-block;
  padding: 4px 20px 3px;
  border: 1px solid #cfe4f5;
  border-radius: 23px;
  background: #fafcff;
}
.cart-button {
  display: flex;
  align-items: center;
  gap: 29px;
  width: 316px;
  height: 80px;
  margin: 38px 0 0 2px;
  padding-left: 30px;
  border: 3px solid #0077c8;
  color: #0077c8;
  text-align: left;
}
.pin { width: 30px; height: 40px; }
.cart-text { display: flex; flex-direction: column; line-height: 30px; }
.cart-text span { font-size: 22px; line-height: 24px; font-weight: 500; }
.locator { width: 440px; height: 660px; margin-top: 42px; justify-self: center; }

/* Sections */
.key-facts { margin-top: 40px; }
.datasets { margin-top: 100px; }
.locations { margin-top: 96px; flex: 1; display: flex; flex-direction: column; }
.split { display: grid; grid-template-columns: 413px minmax(0, 1fr); gap: 50px; padding-right: 51px; }
.key-facts .split { min-height: 400px; }
.side-nav { border-right: 1px solid #2a2d34; }
.side-nav li { padding: 8px 20px 8px 0; line-height: 28px; }
.side-nav .active { margin-right: -1px; border-right: 8px solid #2a2d34; }

table { width: 100%; table-layout: fixed; border-collapse: collapse; }
th, td { height: 74px; padding: 0 19px 0 21px; text-align: left; border-bottom: 1px solid #2a2d34; }
th { height: 79px; border-bottom-width: 6px; }
.num { text-align: right; }
tbody tr:last-child td { border-bottom: 0; }

.dataset-links { padding: 20px 0 0 26px; line-height: 45px; }

/* Locations */
.locations h2 { margin-bottom: 5px; }
.toggle { display: flex; align-items: center; gap: 13px; font-size: 24px; line-height: 30px; }
.toggle label { color: #0077c8; font-weight: 500; }
.toggle input {
  appearance: none;
  display: grid;
  place-items: center;
  width: 24px;
  height: 24px;
  margin: 4px 0 0;
  border: 1px solid #a9b3c0;
}
.toggle input:checked::before { content: "✔"; font: 18px/20px "DejaVu Sans", sans-serif; color: #2a2d34; }

.places { flex: 1; display: grid; grid-template-columns: 52fr 50fr; gap: 51px; margin-top: 59px; }
.areas { display: flex; flex-direction: column; }
.tabs { display: flex; border-bottom: 1px solid #2a2d34; }
.tabs a { padding: 4px 25px; margin-bottom: -1px; border-bottom: 8px solid transparent; }
.tabs .active { color: #2a2d34; font-weight: 400; border-color: #2a2d34; }
.areas-body { flex: 1; display: grid; grid-template-columns: 413px minmax(0, 1fr); gap: 76px; margin-top: 25px; }
.area-list { padding-top: 13px; }
.info {
  max-width: 762px;
  padding: 13px 12px 12px 13px;
  border-left: 12px solid #cad1db;
  background: #fafbfe;
  line-height: 37px;
}
.info svg { display: inline-block; width: 28px; height: 28px; margin-right: 19px; vertical-align: -3px; }
.wards { display: flex; flex-direction: column; gap: 6px; margin-top: 19px; line-height: 41px; }

/* Map */
.map { position: relative; align-self: start; overflow: hidden; }
.map-art { width: 100%; height: auto; }
.map-art path { vector-effect: non-scaling-stroke; }
.minor { fill: none; stroke: #fff; stroke-width: 3; stroke-linejoin: round; }
.major { fill: none; stroke: #d9d9d9; stroke-width: 8; stroke-linejoin: round; }
.outline { fill: none; stroke: #003a94; stroke-width: 4; }
.ward-lines { fill: none; stroke: #0065bd; stroke-width: 2; }
.labels text {
  font: 19px Roboto, sans-serif;
  text-anchor: middle;
  fill: #555;
  stroke: #f4f4f4;
  stroke-width: 4;
  stroke-linejoin: round;
  paint-order: stroke;
}
.labels .district { letter-spacing: 2px; }
.labels .hamlet { font-size: 15px; font-weight: 500; letter-spacing: 1px; }
.labels .city { font-size: 40px; font-weight: 500; }
.google {
  font: 30px Lato, sans-serif;
  fill: #fff;
  stroke: #999;
  stroke-width: 5;
  stroke-linejoin: round;
  paint-order: stroke;
}
.map-type, .map-full, .map-zoom {
  position: absolute;
  background: #fff;
  border-radius: 3px;
  box-shadow: 0 1px 4px rgba(0, 0, 0, .3);
}
.map-type {
  top: 10px;
  left: 9px;
  width: 237px;
  height: 38px;
  display: flex;
  align-items: center;
  gap: 32px;
  padding-left: 39px;
  font-size: 23px;
  color: #666;
}
.map-type .on { font-weight: 700; }
.map-full { top: 10px; right: 9px; width: 38px; height: 38px; }
.map-zoom { right: 9px; bottom: 32px; width: 38px; height: 87px; display: grid; padding: 0 8px; }
.map-zoom button { display: grid; place-items: center; }
.map-zoom button + button { border-top: 2px solid #e6e6e6; }
.map-zoom svg { width: 16px; height: 16px; }
.map-credits {
  position: absolute;
  right: 0;
  bottom: 0;
  display: flex;
  gap: 18px;
  padding: 0 9px 0 6px;
  font: 16px/20px Roboto, sans-serif;
  color: #000;
  background: rgba(245, 245, 245, .7);
}
.map-credits a { color: #000; font-weight: 400; }
```
